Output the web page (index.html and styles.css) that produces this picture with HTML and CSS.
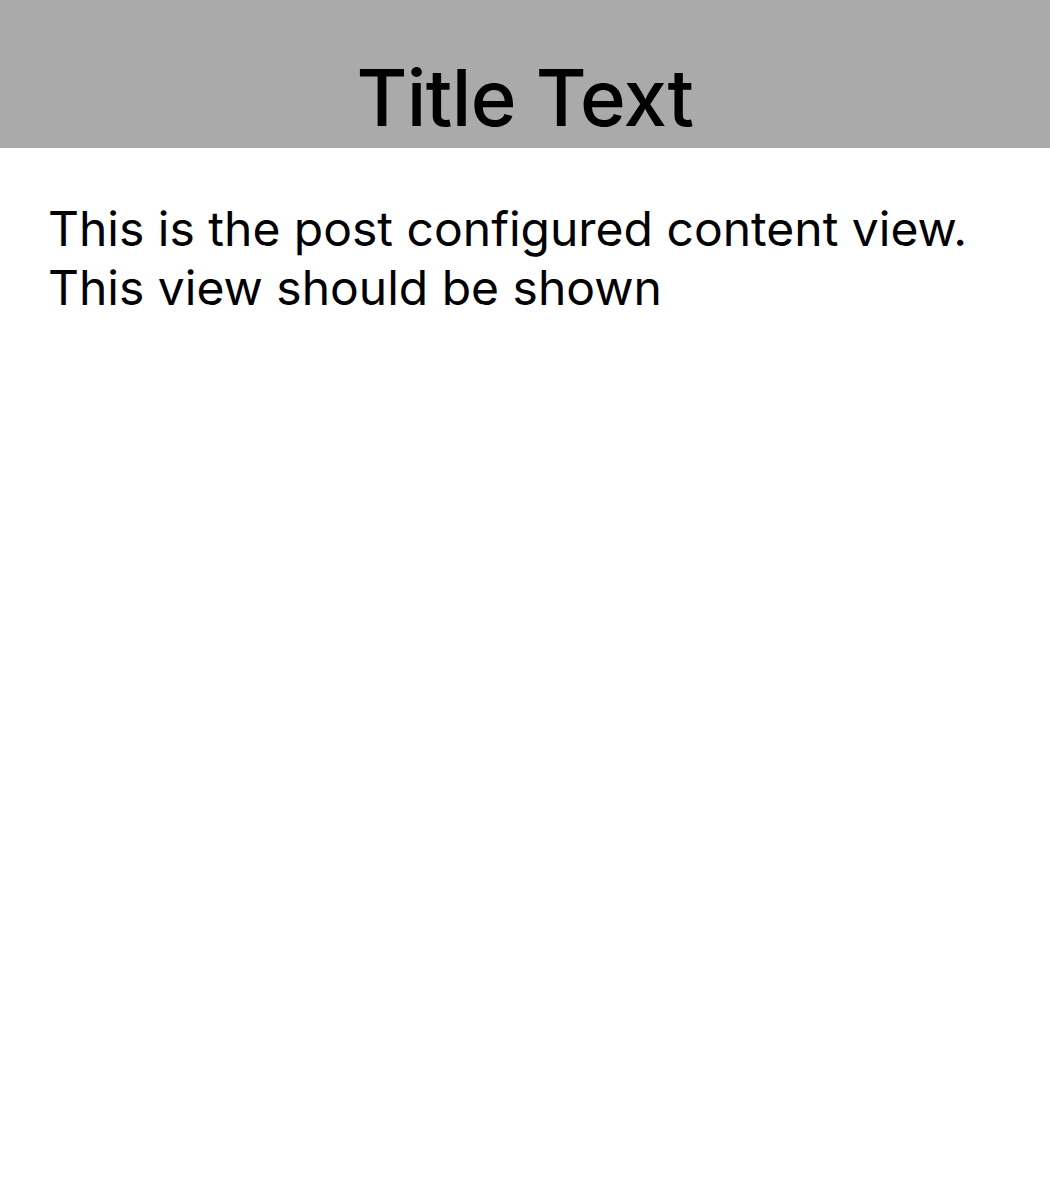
FILE: index.html
```html
<!DOCTYPE html>
<html>
<head>
<meta charset="utf-8">
<link rel="stylesheet" href="styles.css">
</head>
<body>
<header class="header"><h1 class="title">Title Text</h1></header>
<main class="content">
<p class="text">This is the post configured content view.<br>This view should be shown</p>
</main>
</body>
</html>
```
FILE: styles.css
```css
html, body { margin: 0; padding: 0; background: #fff; }
body { font-family: Inter, "Noto Sans", sans-serif; color: #000; }
.header { background: #aaaaaa; height: 148px; display: flex; justify-content: center; align-items: flex-end; }
.title { margin: 0; font-size: 78px; font-weight: 500; line-height: 1; padding-bottom: 11px; letter-spacing: -0.7px; }
.content { padding: 51px 50px 0 48px; }
.text { margin: 0; font-size: 48px; line-height: 59px; font-weight: 400; }
```
